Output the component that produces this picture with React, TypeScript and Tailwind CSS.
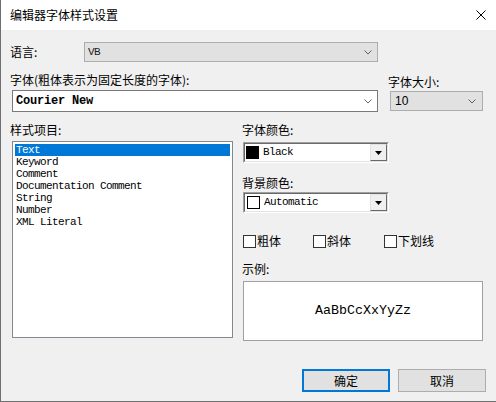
import React from "react";

const UI = { fontFamily: '"Noto Sans CJK SC", "Microsoft YaHei", sans-serif' };
const MONO = { fontFamily: '"Liberation Mono", "Courier New", monospace' };

const items = ["Text", "Keyword", "Comment", "Documentation Comment", "String", "Number", "XML Literal"];

function Chevron() {
  return (
    <svg width="8" height="5" viewBox="0 0 8 5" className="shrink-0">
      <polyline points="0.5,0.5 4,4 7.5,0.5" fill="none" stroke="#606060" strokeWidth="1" />
    </svg>
  );
}

// old style 3D color combo
function ColorCombo({ label, swatch }: { label: string; swatch: "black" | "white" }) {
  return (
    <div className="ml-[1px] w-[146px] h-[21px] shrink-0 border border-t-[#a0a0a0] border-l-[#a0a0a0] border-b-white border-r-white">
      <div className="h-full flex items-center bg-white border border-t-[#696969] border-l-[#696969] border-b-[#e3e3e3] border-r-[#e3e3e3]">
        <div
          className={
            swatch === "black"
              ? "ml-[1px] w-[13px] h-[13px] bg-black shrink-0"
              : "ml-[2px] w-[13px] h-[13px] bg-white border border-black shrink-0"
          }
        />
        <span className="ml-[4px] text-[11px] tracking-[-0.6px] leading-[13px] text-black" style={MONO}>
          {label}
        </span>
        <div className="ml-auto w-[17px] h-full flex items-center justify-center bg-[#f0f0f0] border border-t-[#e3e3e3] border-l-[#e3e3e3] border-b-[#696969] border-r-[#696969]">
          <svg width="7" height="4" viewBox="0 0 7 4">
            <polygon points="0,0 7,0 3.5,4" fill="#000" />
          </svg>
        </div>
      </div>
    </div>
  );
}

function Check({ label, w }: { label: string; w: string }) {
  return (
    <div className={`flex items-center ${w}`}>
      <div className="w-[13px] h-[13px] border border-[#333] bg-white shrink-0" />
      <span className="ml-[1px] text-[12px] leading-[16px]">{label}</span>
    </div>
  );
}

export default function App() {
  return (
    <div className="w-[496px] h-[402px] flex flex-col border-l border-b border-[#6f6f6f] bg-[#f0f0f0] text-black overflow-hidden" style={UI}>
      {/* title bar */}
      <div className="h-[30px] shrink-0 bg-white flex items-center pl-[9px] pr-[10px]">
        <span className="text-[12px]">编辑器字体样式设置</span>
        <svg width="10" height="10" viewBox="0 0 10 10" className="ml-auto">
          <line x1="0.5" y1="0.5" x2="9.5" y2="9.5" stroke="#000" strokeWidth="1" />
          <line x1="9.5" y1="0.5" x2="0.5" y2="9.5" stroke="#000" strokeWidth="1" />
        </svg>
      </div>

      {/* language */}
      <div className="mt-[12px] h-[20px] shrink-0 flex items-center pl-[9px]">
        <span className="w-[74px] text-[12px]">语言:</span>
        <div className="w-[294px] h-[20px] flex items-center bg-[#e1e1e1] border border-[#adadad] pl-[3px] pr-[5px]">
          <span className="text-[11px] tracking-[-0.6px] text-[#202020]" style={MONO}>VB</span>
          <span className="ml-auto"><Chevron /></span>
        </div>
      </div>

      {/* font + size */}
      <div className="mt-[10px] shrink-0 flex pl-[9px]">
        <div className="w-[368px] flex flex-col">
          <span className="h-[16px] leading-[16px] text-[12px]">字体(粗体表示为固定长度的字体):</span>
          <div className="mt-[2px] ml-[2px] w-[366px] h-[22px] flex items-center bg-white border border-[#7a7a7a] pl-[3px] pr-[5px]">
            <span className="text-[12px] font-bold tracking-[-0.2px]" style={MONO}>Courier New</span>
            <span className="ml-auto"><Chevron /></span>
          </div>
        </div>
        <div className="ml-[10px] flex flex-col">
          <span className="mt-[2px] h-[16px] leading-[16px] text-[12px]">字体大小:</span>
          <div className="mt-[1px] ml-[2px] w-[93px] h-[20px] flex items-center bg-[#e1e1e1] border border-[#adadad] pl-[4px] pr-[6px]">
            <span className="text-[12px]" style={{ fontFamily: '"Liberation Sans", Arial, sans-serif' }}>10</span>
            <span className="ml-auto"><Chevron /></span>
          </div>
        </div>
      </div>

      {/* styles + colors */}
      <div className="shrink-0 flex pl-[9px]">
        <div className="w-[223px] flex flex-col">
          <span className="mt-[10px] h-[16px] leading-[16px] text-[12px]">样式项目:</span>
          <div className="mt-[3px] ml-[2px] w-[221px] h-[197px] bg-white border border-[#828790] p-[2px] pt-[2px]">
            {items.map((t, i) => (
              <div
                key={t}
                className={
                  i === 0
                    ? "h-[12px] leading-[12px] pl-[1px] text-[11px] tracking-[-0.6px] bg-[#0078d7] text-white"
                    : "h-[12px] leading-[12px] pl-[1px] text-[11px] tracking-[-0.6px] text-black"
                }
                style={MONO}
              >
                {t}
              </div>
            ))}
          </div>
        </div>

        <div className="ml-[9px] flex flex-col">
          <span className="mt-[10px] h-[16px] leading-[16px] text-[12px]">字体颜色:</span>
          <div className="mt-[4px]">
            <ColorCombo label="Black" swatch="black" />
          </div>
          <span className="mt-[12px] h-[16px] leading-[16px] text-[12px]">背景颜色:</span>
          <div className="mt-[1px]">
            <ColorCombo label="Automatic" swatch="white" />
          </div>
          <div className="mt-[20px] h-[16px] ml-[1px] flex items-center">
            <Check label="粗体" w="w-[70px]" />
            <Check label="斜体" w="w-[71px]" />
            <Check label="下划线" w="w-[70px]" />
          </div>
          <span className="mt-[12px] h-[16px] leading-[16px] text-[12px]">示例:</span>
          <div className="mt-[4px] ml-[1px] w-[240px] h-[60px] bg-white border border-[#a0a0a0] flex items-center justify-center">
            <span className="text-[13.33px] text-black" style={MONO}>AaBbCcXxYyZz</span>
          </div>
        </div>
      </div>

      {/* buttons */}
      <div className="mt-[28px] shrink-0 flex justify-end gap-[8px] pr-[10px]">
        <button className="w-[88px] h-[23px] bg-[#e1e1e1] border-2 border-[#0078d7] text-[12px]">确定</button>
        <button className="w-[88px] h-[23px] bg-[#e1e1e1] border border-[#adadad] text-[12px]">取消</button>
      </div>
    </div>
  );
}
